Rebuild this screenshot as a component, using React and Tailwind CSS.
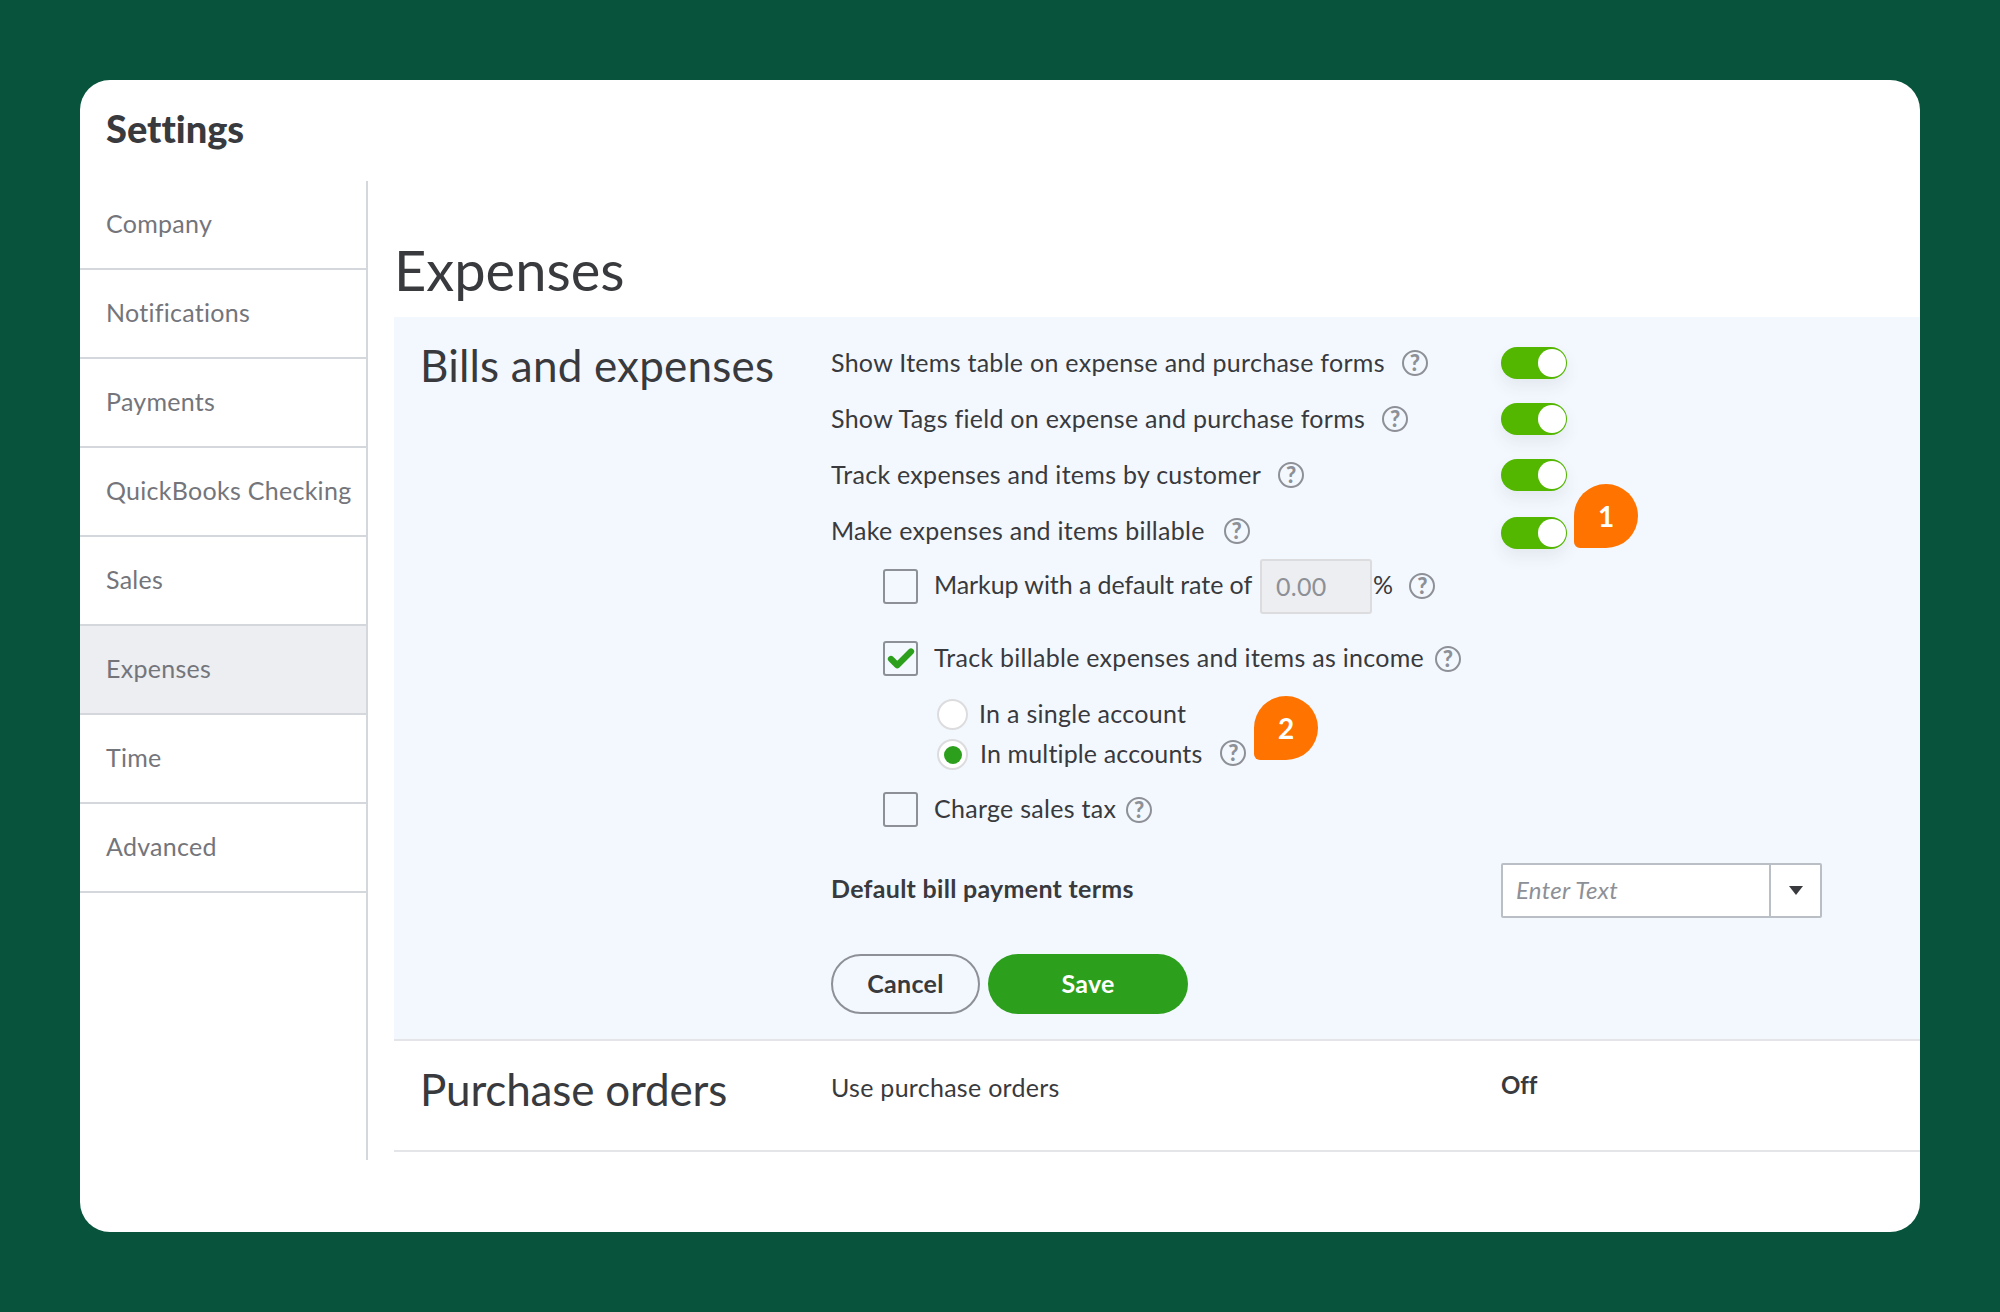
import { Check } from "lucide-react";

const font = { fontFamily: '"Lato", "Noto Sans", sans-serif', fontVariantLigatures: "none" };

const navItems = [
  "Company",
  "Notifications",
  "Payments",
  "QuickBooks Checking",
  "Sales",
  "Expenses",
  "Time",
  "Advanced",
];

const Help = ({ className = "" }) => (
  <span
    className={`flex h-[26px] w-[26px] shrink-0 items-center justify-center rounded-full border-[2.5px] border-[#8d9096] text-[22px] leading-none font-black tracking-normal text-[#8d9096] ${className}`}
  >
    ?
  </span>
);

const Toggle = ({ className = "" }) => (
  <span
    className={`flex h-[32px] w-[66px] items-center justify-end rounded-full bg-[#53b700] pr-[1px] shadow-[0_8px_16px_rgba(57,58,61,0.08)] ${className}`}
  >
    <span className="h-[28px] w-[28px] rounded-full bg-white" />
  </span>
);

const ToggleRow = ({ label, gap, toggleClass }) => (
  <div className="flex h-[56px] items-center">
    <div className="flex w-[670px] items-center">
      <span className={gap}>{label}</span>
      <Help />
    </div>
    <Toggle className={toggleClass} />
  </div>
);

const Box = ({ checked }) => (
  <span className="flex h-[35px] w-[35px] shrink-0 items-center justify-center rounded-[3px] border-2 border-[#8d9096]">
    {checked && <Check className="h-[30px] w-[30px] text-[#2ca01c]" strokeWidth={5} />}
  </span>
);

const Radio = ({ checked }) => (
  <span className="flex h-[31px] w-[31px] shrink-0 items-center justify-center rounded-full border-2 border-[#dcdcde] bg-white">
    {checked && <span className="h-[18px] w-[18px] rounded-full bg-[#2ca01c]" />}
  </span>
);

const Badge = ({ n, className }) => (
  <span
    className={`absolute flex h-[64px] w-[64px] items-center justify-center rounded-[32px_32px_32px_6px] bg-[#ff7300] text-[28px] font-bold tracking-normal text-white ${className}`}
  >
    {n}
  </span>
);

export default function App() {
  return (
    <div style={font} className="flex h-[1312px] w-[2000px] items-start bg-[#07533b] p-[80px]">
      <div className="flex h-[1152px] w-[1840px] flex-col rounded-[30px] bg-white text-[25px] tracking-[0.28px] text-[#393a3d]">
        <h1 className="h-[101px] pt-[26px] pl-[26px] text-[38px] leading-[44px] font-black tracking-normal">Settings</h1>

        <div className="flex">
          {/* sidebar */}
          <nav className="h-[979px] w-[288px] shrink-0 border-r-2 border-[#d4d7dc]">
            {navItems.map((item) => (
              <div
                key={item}
                className={`flex h-[89px] items-center border-b-2 border-[#d4d7dc] pb-[2px] pl-[26px] text-[#74757b] ${
                  item === "Expenses" ? "bg-[#eceef1]" : ""
                }`}
              >
                {item}
              </div>
            ))}
          </nav>

          {/* content */}
          <main className="flex-1 pl-[26px]">
            <h2 className="flex h-[136px] items-end pb-[14px] text-[56px] leading-[66px] tracking-normal">Expenses</h2>

            <section className="relative flex h-[724px] border-b-2 border-[#e3e5e8] bg-[#f3f8fe]">
              <h3 className="w-[437px] shrink-0 pt-[22px] pl-[26px] text-[44px] leading-[52px] tracking-[0.2px]">Bills and expenses</h3>

              <div className="flex-1 pt-[18px]">
                <ToggleRow label="Show Items table on expense and purchase forms" gap="mr-[17px]" />
                <ToggleRow label="Show Tags field on expense and purchase forms" gap="mr-[17px]" />
                <ToggleRow label="Track expenses and items by customer" gap="mr-[17px]" />
                <ToggleRow label="Make expenses and items billable" gap="mr-[19px]" toggleClass="translate-y-[2px]" />

                {/* billable options */}
                <div className="pl-[52px]">
                  <div className="flex h-[55px] items-center">
                    <Box />
                    <span className="ml-[16px] -translate-y-[2px] tracking-[-0.08px]">Markup with a default rate of</span>
                    <span className="ml-[8px] flex h-[55px] w-[112px] items-center rounded-[3px] border-2 border-[#dcdcde] bg-[#eceef1] pl-[14px] text-[#8d9096]">
                      0.00
                    </span>
                    <span className="ml-[1px] -translate-y-[2px]">%</span>
                    <Help className="ml-[16px] -translate-y-[1px]" />
                  </div>

                  <div className="mt-[27px] flex h-[35px] items-center">
                    <Box checked />
                    <span className="ml-[16px] -translate-y-[1px]">Track billable expenses and items as income</span>
                    <Help className="ml-[11px]" />
                  </div>

                  <div className="mt-[23px] flex h-[31px] items-center pl-[54px]">
                    <Radio />
                    <span className="ml-[11px] -translate-y-[1px]">In a single account</span>
                  </div>

                  <div className="mt-[9px] flex h-[31px] items-center pl-[54px]">
                    <Radio checked />
                    <span className="ml-[12px] -translate-y-[1px] tracking-[0.14px]">In multiple accounts</span>
                    <Help className="ml-[18px] -translate-y-[2px]" />
                  </div>

                  <div className="mt-[22px] flex h-[35px] items-center">
                    <Box />
                    <span className="ml-[16px] -translate-y-[1px]">Charge sales tax</span>
                    <Help className="ml-[10px]" />
                  </div>
                </div>

                <div className="mt-[36px] flex h-[55px] items-center">
                  <span className="w-[670px] pb-[4px] font-bold">Default bill payment terms</span>
                  <div className="flex h-[55px] w-[321px] rounded-[2px] border-2 border-[#babec5] bg-white">
                    <span className="flex-1 pl-[13px] text-[24px] leading-[49px] text-[#8d9096] italic">Enter Text</span>
                    <span className="flex w-[51px] items-center justify-center border-l-2 border-[#babec5]">
                      <span className="h-0 w-0 border-x-[7px] border-t-[9px] border-x-transparent border-t-[#393a3d]" />
                    </span>
                  </div>
                </div>

                <div className="mt-[36px] flex gap-[8px]">
                  <button className="h-[60px] w-[149px] rounded-full border-2 border-[#8d9096] font-bold">Cancel</button>
                  <button className="h-[60px] w-[200px] rounded-full bg-[#2ca01c] font-bold text-white">Save</button>
                </div>
              </div>

              <Badge n="1" className="top-[167px] left-[1180px]" />
              <Badge n="2" className="top-[379px] left-[860px]" />
            </section>

            <section className="flex h-[111px] border-b-2 border-[#e3e5e8]">
              <h3 className="w-[437px] shrink-0 pt-[22px] pl-[26px] text-[44px] leading-[52px] tracking-[-0.17px]">Purchase orders</h3>
              <div className="flex w-[670px] pt-[28px]">Use purchase orders</div>
              <div className="pt-[26px] text-[24px] font-bold tracking-normal">Off</div>
            </section>
          </main>
        </div>
      </div>
    </div>
  );
}
